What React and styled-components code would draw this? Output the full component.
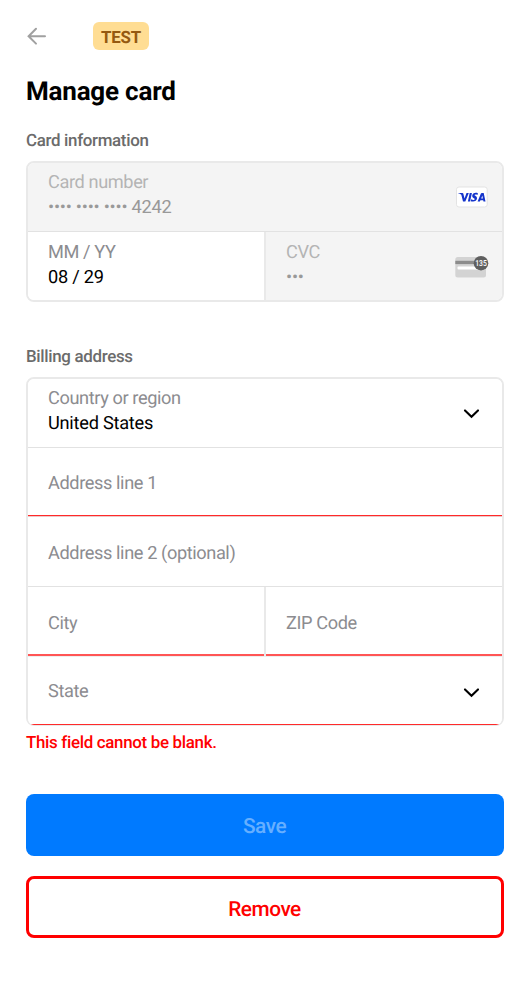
import React from "react";
import styled, { createGlobalStyle } from "styled-components";

const Global = createGlobalStyle`
  * { box-sizing: border-box; }
  body {
    margin: 0;
    background: #fff;
    font-family: Roboto, "Liberation Sans", sans-serif;
    text-rendering: geometricPrecision;
  }
`;

const Screen = styled.main`
  width: 530px;
  height: 1000px;
  padding: 22px 26px 0;
  background: #fff;
  display: flex;
  flex-direction: column;
`;

const TopBar = styled.header`
  display: flex;
  align-items: center;
  height: 28px;
  gap: 46px;
`;

const BackIcon = styled.svg`
  width: 21px;
  height: 20px;
`;

const TestBadge = styled.span`
  display: flex;
  align-items: center;
  justify-content: center;
  width: 56px;
  height: 28px;
  padding-top: 4px;
  border-radius: 6px;
  background: #ffdd93;
  color: #955910;
  font-size: 16.9px;
  font-weight: 700;
  letter-spacing: -0.2px;
  line-height: 20px;
`;

const Title = styled.h1`
  margin: 26px 0 0;
  height: 31px;
  font-size: 26px;
  font-weight: 700;
  letter-spacing: -0.2px;
  line-height: 32px;
  color: #000;
`;

const SectionTitle = styled.h2`
  margin: ${(p) => p.$gap}px 0 0;
  height: 20px;
  font-size: 16.9px;
  font-weight: 500;
  letter-spacing: -0.32px;
  line-height: 22px;
  color: #6b6b6b;
`;

const FieldGroup = styled.section`
  margin-top: 11px;
  border: 2px solid #e9e9e9;
  border-bottom-width: ${(p) => p.$bottom || 2}px;
  border-radius: 8px;
  overflow: hidden;
  height: ${(p) => p.$height}px;
  display: flex;
  flex-direction: column;
`;

const Row = styled.div`
  display: flex;
  flex: none;
  height: ${(p) => p.$height}px;
  border-bottom: ${(p) => (p.$last ? 0 : 1)}px solid ${(p) => p.$line || "#e2e2e2"};
`;

const Field = styled.div`
  flex: 1 1 0;
  display: flex;
  align-items: center;
  justify-content: space-between;
  padding: 0 14px 0 20px;
  background: ${(p) => (p.$disabled ? "#f4f4f4" : "#fff")};
  border-bottom: ${(p) => p.$error || 0}px solid ${(p) => (p.$error > 1 ? "#ff5555" : "#ff2a2a")};
`;

const Divider = styled.div`
  flex: none;
  width: 2px;
  background: #e9e9e9;
`;

const FieldText = styled.div`
  display: flex;
  flex-direction: column;
  padding-top: ${(p) => (p.$shift > 0 ? p.$shift : 0)}px;
  padding-bottom: ${(p) => (p.$shift < 0 ? -p.$shift : 0)}px;
  font-size: 18.2px;
  line-height: 24px;
`;

const Label = styled.span`
  color: ${(p) => (p.$disabled ? "#b4b4b4" : "#8c8c90")};
  letter-spacing: -0.4px;
`;

const Value = styled.span`
  color: ${(p) => (p.$disabled ? "#999" : "#000")};
  letter-spacing: -0.24px;
  line-height: 26px;
`;

const ErrorText = styled.p`
  margin: 6px 0 0;
  height: 20px;
  font-size: 16.9px;
  font-weight: 500;
  letter-spacing: -0.31px;
  line-height: 22px;
  color: #f00;
`;

const Button = styled.button`
  display: flex;
  align-items: center;
  justify-content: center;
  width: 100%;
  height: 62px;
  margin: ${(p) => p.$gap}px 0 0;
  padding: ${(p) => (p.$danger ? 5 : 4)}px 1px 0 0;
  border-radius: 8px;
  border: ${(p) => (p.$danger ? "3px solid #f00" : "0")};
  background: ${(p) => (p.$danger ? "#fff" : "#007aff")};
  color: ${(p) => (p.$danger ? "#f00" : "#66afff")};
  font-family: inherit;
  font-size: 20.8px;
  font-weight: 500;
  letter-spacing: -0.45px;
  line-height: 24px;
  text-rendering: inherit;
`;

const ChevronIcon = styled.svg`
  width: 32px;
  height: 20px;
  margin-top: ${(p) => p.$drop || 0}px;
`;

const Chevron = ({ drop }) => (
  <ChevronIcon $drop={drop} viewBox="0 0 32 20">
    <path d="M9 7.400 15.500 13.800 22 7.400" fill="none" stroke="#000" strokeWidth="2.100" strokeLinecap="round" />
  </ChevronIcon>
);

const Visa = () => (
  <svg width="33" height="22" viewBox="0 0 33 22">
    <rect x="1.500" y="1" width="30.700" height="20" rx="2.500" fill="#fff" stroke="#e3e3e3" />
    <g fill="#1434cb">
      <path d="M3.200 6.900h4.200q.7 0 .9.700l1.200 5 2-5.700h2.300L10.300 15.500H8L6.300 8.800Q5 7.600 3.200 7.200Z" />
      <path d="M14.700 6.900h2.200l-1.800 8.600h-2.200Z" />
      <path d="M22.900 7.200l-.4 1.700c-1.600-.7-3-.5-3 .2 0 .9 2.800 1.100 2.500 3.500-.3 2.800-3.500 3.600-6.300 2.600l.4-1.900c1.800.9 3.500.7 3.600-.1.100-.9-2.600-1.100-2.500-3.400.1-2.700 3.200-3.600 5.700-2.600Z" />
      <path fillRule="evenodd" d="M26.800 6.900h1.900l1.800 8.600h-2l-.3-1.300h-2.800l-.5 1.300h-2.300l3.300-7.900q.3-.7.900-.7Zm.5 2.700-1.100 3h1.700Z" />
    </g>
  </svg>
);

const CvcIcon = styled.svg`
  width: 34px;
  height: 24px;
  margin-right: -1px;
`;

const CvcCard = () => (
  <CvcIcon viewBox="0 0 34 24">
    <rect x="0.300" y="3" width="30.700" height="20.500" rx="2.500" fill="#d3d3d3" />
    <rect x="0.300" y="6.800" width="30.700" height="3.300" fill="#8c8c8c" />
    <rect x="2.500" y="12.500" width="23" height="3" rx="1" fill="#fff" />
    <circle cx="26" cy="9.200" r="7.300" fill="#5f5f5f" />
    <text x="20.200" y="12.100" textLength="11.600" lengthAdjust="spacingAndGlyphs" fontFamily="Roboto, sans-serif" fontSize="8.300" fontWeight="500" fill="#fff">135</text>
  </CvcIcon>
);

const LabeledField = ({ label, value, disabled, error, shift, children }) => (
  <Field $disabled={disabled} $error={error}>
    <FieldText $shift={shift ?? (value ? -2 : 5)}>
      <Label $disabled={disabled}>{label}</Label>
      {value && <Value $disabled={disabled}>{value}</Value>}
    </FieldText>
    {children}
  </Field>
);

export default function App() {
  return (
    <Screen>
      <Global />
      <TopBar>
        <BackIcon viewBox="0 0 21 20">
          <path d="M19 10.200H3M10 2.800 2.600 10.200l7.400 7.400" fill="none" stroke="#a0a0a0" strokeWidth="2" strokeLinecap="round" />
        </BackIcon>
        <TestBadge>TEST</TestBadge>
      </TopBar>
      <Title>Manage card</Title>
      <SectionTitle $gap={23}>Card information</SectionTitle>
      <FieldGroup $height={141}>
        <Row $height={69}>
          <LabeledField label="Card number" value="•••• •••• •••• 4242" disabled><Visa /></LabeledField>
        </Row>
        <Row $height={68} $last>
          <LabeledField label="MM / YY" value="08 / 29" shift={-1} />
          <Divider />
          <LabeledField label="CVC" value="•••" shift={-1} disabled><CvcCard /></LabeledField>
        </Row>
      </FieldGroup>
      <SectionTitle $gap={44}>Billing address</SectionTitle>
      <FieldGroup $height={349} $bottom={1}>
        <Row $height={69}>
          <LabeledField label="Country or region" value="United States" shift={-2}><Chevron /></LabeledField>
        </Row>
        <Row $height={69} $line="#ecc8c8"><LabeledField label="Address line 1" error={1} /></Row>
        <Row $height={70}><LabeledField label="Address line 2 (optional)" /></Row>
        <Row $height={70} $line="#eee">
          <LabeledField label="City" error={2} shift={6} />
          <Divider />
          <LabeledField label="ZIP Code" error={2} shift={6} />
        </Row>
        <Row $height={68} $last>
          <LabeledField label="State" error={1} shift={3}><Chevron drop={3} /></LabeledField>
        </Row>
      </FieldGroup>
      <ErrorText>This field cannot be blank.</ErrorText>
      <Button $gap={42}>Save</Button>
      <Button $gap={20} $danger>Remove</Button>
    </Screen>
  );
}
